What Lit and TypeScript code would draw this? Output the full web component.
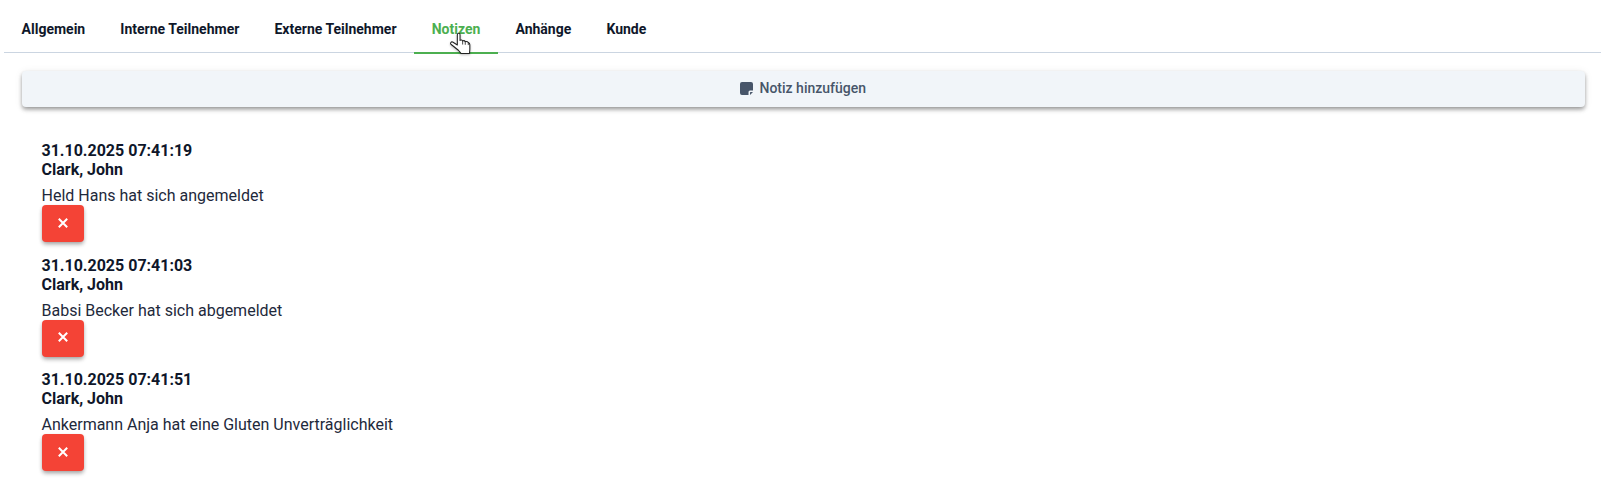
import { LitElement, html, css, svg } from "lit";
import { customElement } from "lit/decorators.js";

const tabs = ["Allgemein", "Interne Teilnehmer", "Externe Teilnehmer", "Notizen", "Anhänge", "Kunde"];
const notes = [
  ["31.10.2025 07:41:19", "Clark, John", "Held Hans hat sich angemeldet"],
  ["31.10.2025 07:41:03", "Clark, John", "Babsi Becker hat sich abgemeldet"],
  ["31.10.2025 07:41:51", "Clark, John", "Ankermann Anja hat eine Gluten Unverträglichkeit"],
];

@customElement("app-root")
export class AppRoot extends LitElement {
  static styles = css`
    :host { display: block; font-family: Roboto, "Liberation Sans", sans-serif; color: #0f172a; background: #fff; height: 498px; overflow: hidden; position: relative; }
    .tabs { display: flex; height: 53px; margin-left: 4px; border-bottom: 1px solid #cbd5e1; box-sizing: border-box; }
    .tab { padding: 0 17.58px; display: flex; align-items: center; font-size: 14px; font-weight: 700; height: 54px; box-sizing: border-box; padding-top: 6px; padding-bottom: 0; border-bottom: 2px solid transparent; }
    .tab.active { color: #4caf50; border-bottom-color: #4caf50; }
    .add { margin: 18px 0 0 22px; width: 1563px; height: 36px; box-sizing: border-box; padding-bottom: 2px; background: #f1f5f9; border-radius: 4px; box-shadow: 0 2px 4px -1px rgba(0,0,0,.3), 0 3px 4px rgba(0,0,0,.18), 0 1px 8px rgba(0,0,0,.08); display: flex; align-items: center; justify-content: center; gap: 6px; font-size: 14px; font-weight: 500; color: #475569; }
    .add svg { width: 13px; height: 13px; }
    .add span { margin-right: .5px; }
    .list { padding: 34px 0 0 41.5px; }
    .note { height: 114.5px; }
    .ts, .au { font-size: 16px; font-weight: 700; line-height: 19px; }
    .msg { font-size: 16px; line-height: 19px; margin-top: 7px; color: #1e293b; }
    .del { width: 42px; height: 37px; margin: 0 0 0 .5px; padding-bottom: 2px; box-sizing: border-box; background: #f44336; border-radius: 4px; box-shadow: 0 2px 4px -1px rgba(0,0,0,.3), 0 3px 4px rgba(0,0,0,.16); display: flex; align-items: center; justify-content: center; }
    .del svg { width: 14px; height: 14px; }
    .cursor { position: absolute; left: 449px; top: 31.5px; width: 25px; height: 23px; filter: drop-shadow(0 1px 1px rgba(0,0,0,.25)); }
  `;
  render() {
    return html`
      <div class="tabs">${tabs.map(t => html`<div class="tab ${t === "Notizen" ? "active" : ""}">${t}</div>`)}</div>
      <div class="add">
        <svg viewBox="0 0 13 13"><path fill="#475569" d="M2 0h9a2 2 0 0 1 2 2v6.500h-3a1.500 1.500 0 0 0-1.500 1.500v3H2a2 2 0 0 1-2-2V2a2 2 0 0 1 2-2z"/><path fill="#475569" d="M10 13l3-3h-2.500a.5.500 0 0 0-.5.500z"/></svg>
        <span>Notiz hinzufügen</span>
      </div>
      <div class="list">
        ${notes.map(n => html`<div class="note">
          <div class="ts">${n[0]}</div><div class="au">${n[1]}</div><div class="msg">${n[2]}</div>
          <div class="del"><svg viewBox="0 0 14 14"><path d="M2.800 2.800l8.400 8.400M11.200 2.800l-8.400 8.400" stroke="#fff" stroke-width="2" fill="none"/></svg></div>
        </div>`)}
      </div>
      <svg class="cursor" viewBox="0 0 24 22">
        ${svg`<path fill="#fff" stroke="#222" stroke-width="1" stroke-linejoin="round" d="M8 2.500c0-1.700 2.600-1.700 2.600 0V8c1-.6 2.100-.3 2.500.5 1-.5 2-.2 2.500.7 1.200-.4 2.300 0 2.900.9.800.3 1.500 1 1.500 2v4.500L19.700 20.500H11.500L9 17.500 1.800 11.700c-.9-.9.300-2.800 1.700-2.100L8 12.500z"/><path stroke="#222" stroke-width=".8" fill="none" d="M13.100 8.500v3.500M15.600 9.200v3M18.500 10.100v2.400"/>`}
      </svg>
    `;
  }
}
